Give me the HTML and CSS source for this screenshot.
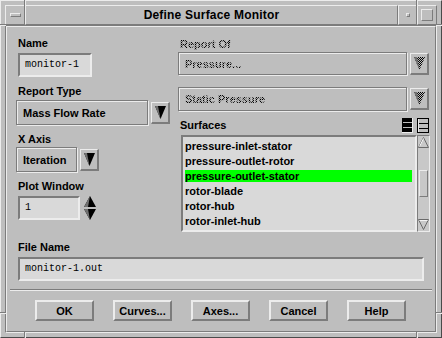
FILE: index.html
```html
<!DOCTYPE html>
<html>
<head>
<meta charset="utf-8">
<link rel="stylesheet" href="styles.css">
</head>
<body>
<div class="win">
  <span class="notch nv" style="left:23px;top:-1px"></span>
  <span class="notch nv" style="left:415px;top:-1px"></span>
  <span class="notch nv" style="left:23px;bottom:-1px"></span>
  <span class="notch nv" style="left:415px;bottom:-1px"></span>
  <span class="notch nh" style="top:23px;left:-1px"></span>
  <span class="notch nh" style="top:311px;left:-1px"></span>
  <span class="notch nh" style="top:23px;right:-1px"></span>
  <span class="notch nh" style="top:311px;right:-1px"></span>

  <div class="titlebar">
    <div class="tb-seg tb-menu"><span class="menu-bar"></span></div>
    <div class="tb-seg tb-title">Define Surface Monitor</div>
    <div class="tb-seg tb-min"><span class="min-box"></span></div>
    <div class="tb-seg tb-max"><span class="max-box"></span></div>
  </div>

  <div class="client">
    <div class="dialog">
      <div class="main">
        <div class="col-left">
          <div class="label">Name</div>
          <div class="textfield tf-name">monitor-1</div>

          <div class="label gap8">Report Type</div>
          <div class="optrow gap2">
            <div class="option opt-type">Mass Flow Rate</div>
            <div class="arrowbtn">
              <svg width="11" height="13" viewBox="0 0 11 13"><polygon points="0,0 11,0 5.5,13" fill="#000"/><polygon points="0,0 3,0 5.5,13 4.2,10" fill="#707070"/></svg>
            </div>
          </div>

          <div class="label gap8">X Axis</div>
          <div class="optrow gap1">
            <div class="option opt-axis">Iteration</div>
            <div class="arrowbtn">
              <svg width="11" height="13" viewBox="0 0 11 13"><polygon points="0,0 11,0 5.5,13" fill="#000"/><polygon points="0,0 3,0 5.5,13 4.2,10" fill="#707070"/></svg>
            </div>
          </div>

          <div class="label gap8">Plot Window</div>
          <div class="plotrow">
            <div class="textfield tf-plot">1</div>
            <div class="spinner">
              <svg width="12" height="11" viewBox="0 0 12 11"><polygon points="6,0 12,11 0,11" fill="#000"/><polygon points="6,0 4,11 0,11" fill="#707070"/></svg>
              <svg width="12" height="11" viewBox="0 0 12 11"><polygon points="0,0 12,0 6,11" fill="#000"/><polygon points="0,0 4,0 6,11" fill="#707070"/></svg>
            </div>
          </div>
        </div>

        <div class="col-right">
          <div class="label insens first">Report Of</div>
          <div class="optrow gap1">
            <div class="option opt-wide opt-r1"><span class="insens">Pressure...</span></div>
            <div class="arrowbtn">
              <svg width="11" height="13" viewBox="0 0 11 13"><defs><pattern id="st1" width="2" height="2" patternUnits="userSpaceOnUse"><rect width="1" height="1" fill="#000"/><rect x="1" y="1" width="1" height="1" fill="#000"/></pattern></defs><polygon points="0,0 11,0 5.5,13" fill="url(#st1)"/><polygon points="0,0 3,0 5.5,13 4.2,10" fill="#707070"/></svg>
            </div>
          </div>

          <div class="optrow gap12">
            <div class="option opt-wide"><span class="insens">Static Pressure</span></div>
            <div class="arrowbtn">
              <svg width="11" height="13" viewBox="0 0 11 13"><defs><pattern id="st2" width="2" height="2" patternUnits="userSpaceOnUse"><rect width="1" height="1" fill="#000"/><rect x="1" y="1" width="1" height="1" fill="#000"/></pattern></defs><polygon points="0,0 11,0 5.5,13" fill="url(#st2)"/><polygon points="0,0 3,0 5.5,13 4.2,10" fill="#707070"/></svg>
            </div>
          </div>

          <div class="surf-head">
            <div class="label surf-label">Surfaces</div>
            <div class="surf-icons">
              <svg width="11" height="15" viewBox="0 0 11 15"><rect x="0" y="0" width="11" height="15" fill="#000"/><rect x="1" y="4" width="9" height="1" fill="#bebebe"/><rect x="1" y="9" width="9" height="1" fill="#bebebe"/><rect x="10" y="0" width="1" height="15" fill="#ececec"/><rect x="0" y="14" width="11" height="1" fill="#ececec"/></svg>
              <svg width="12" height="15" viewBox="0 0 12 15"><rect x="0.5" y="0.5" width="11" height="14" fill="#bebebe" stroke="#000"/><rect x="1" y="5" width="10" height="1" fill="#000"/><rect x="1" y="10" width="10" height="1" fill="#000"/><rect x="1" y="1" width="1" height="13" fill="#ececec"/></svg>
            </div>
          </div>

          <div class="listwrap">
            <div class="list">
              <div class="item">pressure-inlet-stator</div>
              <div class="item">pressure-outlet-rotor</div>
              <div class="item sel">pressure-outlet-stator</div>
              <div class="item">rotor-blade</div>
              <div class="item">rotor-hub</div>
              <div class="item">rotor-inlet-hub</div>
            </div>
            <div class="scroll">
              <svg width="11" height="11" viewBox="0 0 11 11"><polygon points="5.5,0.5 10.5,10.5 0.5,10.5" fill="none" stroke="#6a6a6a"/><polyline points="5.5,1.5 1.5,9.5" fill="none" stroke="#f4f4f4"/></svg>
              <div class="trough"><div class="thumb"></div></div>
              <svg width="11" height="11" viewBox="0 0 11 11"><polygon points="0.5,0.5 10.5,0.5 5.5,10.5" fill="none" stroke="#6a6a6a"/><polyline points="1.5,1.5 9.5,1.5" fill="none" stroke="#f4f4f4"/></svg>
            </div>
          </div>
        </div>
      </div>

      <div class="label fn-label">File Name</div>
      <div class="textfield tf-file">monitor-1.out</div>

      <div class="sep"></div>

      <div class="buttons">
        <div class="btn">OK</div>
        <div class="btn">Curves...</div>
        <div class="btn">Axes...</div>
        <div class="btn">Cancel</div>
        <div class="btn">Help</div>
      </div>
    </div>
  </div>
</div>
</body>
</html>
```
FILE: styles.css
```css
* { box-sizing: border-box; }

body {
  margin: 0;
  background: #bebebe;
  font-family: "Liberation Sans", Arial, sans-serif;
  font-size: 11px;
  font-weight: bold;
  color: #000;
}

.win {
  position: relative;
  width: 442px;
  height: 338px;
  background: #bebebe;
  border: 1px solid;
  border-color: #ececec #4a4a4a #4a4a4a #ececec;
  padding: 4px;
  display: flex;
  flex-direction: column;
}

.notch { position: absolute; display: block; }
.nv { width: 2px; height: 6px; border-left: 1px solid #7c7c7c; border-right: 1px solid #ececec; }
.nh { width: 6px; height: 2px; border-top: 1px solid #7c7c7c; border-bottom: 1px solid #ececec; }

.titlebar { display: flex; height: 20px; }
.tb-seg {
  border: 1px solid;
  border-color: #ececec #7c7c7c #7c7c7c #ececec;
  display: flex;
  align-items: center;
  justify-content: center;
}
.tb-menu { width: 20px; }
.tb-title { flex: 1; font-size: 12px; letter-spacing: 0.2px; }
.tb-min { width: 19px; }
.tb-max { width: 20px; }
.menu-bar {
  width: 11px; height: 4px;
  border: 1px solid;
  border-color: #ececec #7c7c7c #7c7c7c #ececec;
}
.min-box {
  width: 4px; height: 4px;
  border: 1px solid;
  border-color: #ececec #7c7c7c #7c7c7c #ececec;
}
.max-box {
  width: 12px; height: 12px;
  border: 1px solid;
  border-color: #ececec #7c7c7c #7c7c7c #ececec;
}

.client {
  flex: 1;
  border: 1px solid;
  border-color: #7c7c7c #ececec #ececec #7c7c7c;
}
.dialog {
  height: 100%;
  border: 1px solid;
  border-color: #ececec #7c7c7c #7c7c7c #ececec;
  padding: 10px 5px 0 9px;
}

.main {
  display: grid;
  grid-template-columns: 154px 252px;
  column-gap: 8px;
  height: 195px;
}

.label {
  height: 13px;
  line-height: 13px;
  padding-left: 2px;
  white-space: nowrap;
}
.gap8 { margin-top: 8px; }
.gap1 { margin-top: 1px; }
.gap2 { margin-top: 2px; }
.gap12 { margin-top: 12px; }
.first { margin-top: 1px; }

.textfield {
  background: #d9d9d9;
  border: 2px solid;
  border-color: #7c7c7c #ececec #ececec #7c7c7c;
  font-family: "Liberation Mono", "DejaVu Sans Mono", monospace;
  font-weight: normal;
  font-size: 10px;
  height: 24px;
  line-height: 20px;
  padding-left: 5px;
  margin-left: 2px;
}
.tf-name { width: 74px; margin-top: 3px; }
.tf-plot { width: 62px; }
.tf-file { width: 406px; margin-top: 3px; }

.optrow { display: flex; align-items: flex-start; }
.option {
  height: 25px;
  border: 1px solid #7c7c7c;
  box-shadow: inset 1px 1px 0 #ececec, 1px 1px 0 #ececec;
  display: flex;
  align-items: center;
  padding-left: 6px;
  white-space: nowrap;
}
.opt-type { width: 133px; }
.opt-axis { width: 61px; }
.opt-wide { width: 229px; height: 24px; }
.opt-r1 { height: 23px; }

.arrowbtn {
  width: 19px;
  height: 22px;
  margin-left: 3px;
  margin-top: 2px;
  border-style: solid;
  border-width: 1px 2px 2px 1px;
  border-color: #ececec #7c7c7c #7c7c7c #ececec;
  display: flex;
  align-items: center;
  justify-content: center;
}
.col-right .arrowbtn { margin-top: 1px; }

.plotrow { display: flex; margin-top: 3px; }
.spinner {
  width: 15px;
  height: 24px;
  margin-left: 2px;
  display: flex;
  flex-direction: column;
  align-items: center;
  justify-content: space-between;
}

.insens {
  color: transparent;
  background: repeating-conic-gradient(#000 0% 25%, #a4a4a4 0% 50%) 0 0 / 2px 2px;
  -webkit-background-clip: text;
  background-clip: text;
}

.surf-head {
  display: flex;
  justify-content: space-between;
  align-items: center;
  height: 15px;
  margin-top: 7px;
}
.surf-label { line-height: 15px; height: 15px; }
.surf-icons { display: flex; gap: 4px; margin-right: 1px; }

.listwrap { display: flex; margin-top: 2px; margin-left: 3px; height: 97px; }
.list {
  width: 236px;
  height: 97px;
  background: #d9d9d9;
  border: 2px solid;
  border-color: #7c7c7c #ececec #ececec #7c7c7c;
  padding: 3px 3px 0 2px;
  overflow: hidden;
}
.item {
  height: 12px;
  line-height: 13px;
  margin-bottom: 3px;
  white-space: nowrap;
}
.sel { background: #00ff00; }

.scroll {
  width: 13px;
  height: 97px;
  background: #c8c8c8;
  border: 1px solid;
  border-color: #7c7c7c #ececec #ececec #7c7c7c;
  display: flex;
  flex-direction: column;
  align-items: center;
  padding: 1px 0;
}
.trough { flex: 1; width: 100%; }
.thumb {
  width: 9px;
  height: 27px;
  margin: 22px auto 0;
  border: 1px solid;
  border-color: #ececec #7c7c7c #7c7c7c #ececec;
}

.fn-label { margin-top: 9px; }

.sep {
  height: 2px;
  margin: 8px -2px 0 -6px;
  border-top: 1px solid #7c7c7c;
  border-bottom: 1px solid #ececec;
}

.buttons {
  display: flex;
  gap: 19px;
  padding-left: 19px;
  margin-top: 9px;
}
.btn {
  width: 59px;
  height: 21px;
  border: 2px solid;
  border-color: #ececec #7c7c7c #7c7c7c #ececec;
  display: flex;
  align-items: center;
  justify-content: center;
  white-space: nowrap;
}
```
